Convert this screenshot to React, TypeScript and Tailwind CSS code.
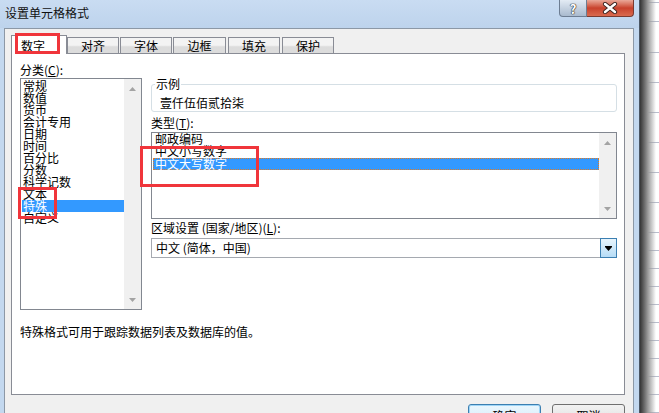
import React from 'react';

const categories = ['常规', '数值', '货币', '会计专用', '日期', '时间', '百分比', '分数', '科学记数', '文本', '特殊', '自定义'];
const types = ['邮政编码', '中文小写数字', '中文大写数字'];
const sheetRows = [3, 19, 31, 30, 30, 30, 30, 30, 30, 18, 18, 18, 18, 18, 18, 18, 18, 18, 18];

const tabs = [
  { label: '对齐', w: 'w-[52px]', ml: 'ml-0' },
  { label: '字体', w: 'w-[52px]', ml: 'ml-[1px]' },
  { label: '边框', w: 'w-[53px]', ml: 'ml-[1px]' },
  { label: '填充', w: 'w-[52px]', ml: 'ml-[2px]' },
  { label: '保护', w: 'w-[52px]', ml: 'ml-[2px]' },
];

const ArrowUp = () => (
  <svg width="7" height="4" viewBox="0 0 7 4">
    <polygon points="3.5,0 7,4 0,4" fill="#a3a3a3" />
  </svg>
);

const ArrowDown = () => (
  <svg width="7" height="4" viewBox="0 0 7 4">
    <polygon points="0,0 7,0 3.5,4" fill="#a3a3a3" />
  </svg>
);

const ScrollBar = ({ downAt }: { downAt: string }) => (
  <div className={`flex w-[17px] shrink-0 flex-col items-center justify-between bg-[#f0f0f0] ${downAt}`}>
    <div className="mt-[8px]"><ArrowUp /></div>
    <div className="mb-[7px]"><ArrowDown /></div>
  </div>
);

export default function App() {
  return (
    <div className="relative flex h-[413px] w-[659px] overflow-hidden bg-white font-['Noto_Sans_CJK_SC',sans-serif] text-[12px] leading-[12px] text-black">
      {/* Dialog window */}
      <div className="flex w-[640px] shrink-0 flex-col border-r border-[#4b5663] bg-[#c3d8ef]">
        {/* Title bar */}
        <div className="flex h-[28px] shrink-0 items-start bg-linear-to-b from-[#c9dcf2] to-[#bdd3ec]">
          <span className="ml-[5px] mt-[7px] text-[12px] leading-[12px] text-[#111]">设置单元格格式</span>
          <div className="ml-auto mr-[5px] flex h-[17px]">
            <div className="flex w-[28px] items-center justify-center rounded-bl-[4px] border border-t-0 border-[#6d7d92] bg-linear-to-b from-[#e3ebf4] to-[#a9bace]">
              <span className="text-[13px] font-bold leading-[13px] text-white [text-shadow:0_0_1px_#222,0_0_1px_#222,0_0_1px_#222]">?</span>
            </div>
            <div className="flex w-[47px] items-center justify-center rounded-br-[4px] border border-l-0 border-t-0 border-[#7a3a30] bg-linear-to-b from-[#e9a899] via-[#c8412c] to-[#d96a4f]">
              <svg width="16" height="12" viewBox="0 0 16 12">
                <path d="M3 2 L13 10 M13 2 L3 10" stroke="#3a2420" strokeWidth="4.2" strokeLinecap="round" />
                <path d="M3 2 L13 10 M13 2 L3 10" stroke="#ffffff" strokeWidth="2.4" strokeLinecap="round" />
              </svg>
            </div>
          </div>
        </div>

        {/* Client area */}
        <div className="ml-[4px] mr-[5px] flex flex-1 flex-col border-l border-r border-t border-[#8c98a6] bg-[#f0f0f0]">
          <div className="ml-[6px] mt-[6px] flex w-[614px] flex-col">
            {/* Tab strip */}
            <div className="flex h-[19px] items-end">
              <div className="relative z-10 flex h-[19px] w-[56px] items-start justify-start border border-b-0 border-[#898c95] bg-white pl-[9px] pt-[4px]">
                数字
              </div>
              {tabs.map((t) => (
                <div
                  key={t.label}
                  className={`flex h-[17px] items-start justify-center border border-b-0 border-[#898c95] bg-linear-to-b from-[#f3f3f3] from-45% to-[#dcdcdc] to-55% pt-[2px] ${t.w} ${t.ml}`}
                >
                  {t.label}
                </div>
              ))}
            </div>

            {/* Tab panel */}
            <div className="-mt-px flex h-[342px] flex-col border border-[#898c95] bg-white pl-[8px]">
              <div className="flex">
                {/* Category column */}
                <div className="flex w-[122px] flex-col">
                  <div className="mt-[10px] h-[12px]">分类(<u>C</u>):</div>
                  <div className="mt-[2px] flex h-[232px] border border-[#828790] bg-white">
                    <div className="flex flex-1 flex-col pl-[1px] pt-[1px]">
                      {categories.map((c) => (
                        <div
                          key={c}
                          className={`h-[12px] pl-[1px] leading-[12px] ${c === '特殊' ? 'bg-[#3399ff] text-white' : ''}`}
                        >
                          {c}
                        </div>
                      ))}
                    </div>
                    <ScrollBar downAt="" />
                  </div>
                </div>

                {/* Right column */}
                <div className="ml-[9px] flex w-[466px] flex-col">
                  <div className="relative mt-[30px] h-[28px] rounded-[3px] border border-[#d5dfe5] pl-[8px] pt-[12px]">
                    <span className="absolute left-[3px] top-[-7px] bg-white px-[1px]">示例</span>
                    壹仟伍佰贰拾柒
                  </div>

                  <div className="mt-[5px] h-[12px]">类型(<u>T</u>):</div>
                  <div className="mt-[3px] flex h-[87px] border border-[#828790] bg-white">
                    <div className="flex flex-1 flex-col pl-px pt-px">
                      {types.map((t) => (
                        <div
                          key={t}
                          className={`h-[12px] pl-[1px] leading-[10px] ${
                            t === '中文大写数字'
                              ? 'border border-dotted border-[#e07b24] bg-[#3399ff] text-white'
                              : 'pl-[2px]'
                          }`}
                        >
                          {t}
                        </div>
                      ))}
                    </div>
                    <ScrollBar downAt="" />
                  </div>

                  <div className="mt-[3px] h-[12px]">区域设置 (国家/地区)(<u>L</u>):</div>
                  <div className="mt-[4px] flex h-[20px] items-center border border-[#a5a9b0] bg-white">
                    <span className="flex-1 pl-[4px]">中文 (简体，中国)</span>
                    <div className="-my-px -mr-px flex h-[20px] w-[17px] items-center justify-center border border-[#3c7fb1] bg-linear-to-b from-[#e8f5fd] to-[#b6dcf6]">
                      <svg width="7" height="5" viewBox="0 0 7 5">
                        <rect x="0" y="0" width="7" height="1" fill="#000" />
                        <polygon points="0,1 7,1 3.5,5" fill="#000" />
                      </svg>
                    </div>
                  </div>
                </div>
              </div>

              <div className="mt-[16px] h-[12px]">特殊格式可用于跟踪数据列表及数据库的值。</div>
            </div>

            {/* Buttons */}
            <div className="mt-[9px] flex justify-end gap-[11px]">
              <div className="flex h-[23px] w-[73px] items-start justify-center rounded-[3px] border border-[#3c7fb1] bg-linear-to-b from-[#eaf6fd] to-[#d2ecfb] pt-[5px] shadow-[inset_0_0_0_1px_#9ed5f7]">
                确定
              </div>
              <div className="flex h-[23px] w-[73px] items-start justify-center rounded-[3px] border border-[#707070] bg-linear-to-b from-[#f2f2f2] to-[#dddddd] pt-[5px]">
                取消
              </div>
            </div>
          </div>
        </div>
      </div>

      {/* Spreadsheet behind the dialog */}
      <div className="relative flex flex-1 flex-col bg-white">
        {sheetRows.map((h, i) => (
          <div key={i} className="shrink-0 border-b border-[#b9bdcc]" style={{ height: h }} />
        ))}
        <div className="absolute left-0 top-0 h-full w-[16px] bg-linear-to-r from-[#353535] via-[#9c9c9c] to-transparent" />
      </div>

      {/* Red annotation boxes */}
      <div className="absolute left-[15px] top-[33px] z-20 h-[21px] w-[45px] border-[3px] border-[#f0353b]" />
      <div className="absolute left-[18px] top-[187px] z-20 h-[32px] w-[39px] border-[3px] border-[#f0353b]" />
      <div className="absolute left-[140px] top-[146px] z-20 h-[41px] w-[119px] border-[3px] border-[#f0353b]" />
    </div>
  );
}
